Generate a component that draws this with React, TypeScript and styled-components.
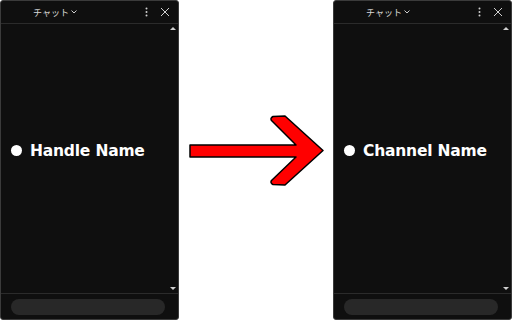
import React from 'react'
import styled, { createGlobalStyle } from 'styled-components';

const GlobalStyle = createGlobalStyle`
  html, body {
    margin: 0;
    padding: 0;
    background: #ffffff;
    font-family: "DejaVu Sans", Verdana, sans-serif;
  }
`

const Stage = styled.div`
  width: 512px;
  height: 320px;
  display: flex;
  background: #ffffff;
`

const Panel = styled.div`
  width: 179px;
  height: 320px;
  box-sizing: border-box;
  background: #0f0f0f;
  border: 1px solid #3b3b3b;
  border-radius: 3px;
  display: flex;
  flex-direction: column;
  overflow: hidden;
`

const Header = styled.div`
  height: 22px;
  flex: none;
  display: flex;
  align-items: center;
  border-bottom: 1px solid #2b2b2b;
  padding: 0 8px 0 32px;
  color: #d8d8d8;
  font-size: 9px;
  font-family: "Noto Sans CJK JP", sans-serif;

  .title {
    display: flex;
    align-items: center;
    gap: 1px;
    flex: 1;
  }

  .icons {
    display: flex;
    align-items: center;
    gap: 12px;
  }
`

const Body = styled.div`
  flex: 1;
  position: relative;
  display: flex;
  align-items: center;
  padding: 0 0 16px 10px;
`

const Scroll = styled.div<{ $down?: boolean }>`
  position: absolute;
  right: 2px;
  ${p => p.$down ? 'bottom: 3px;' : 'top: 3px;'}
  width: 0;
  height: 0;
  border-left: 3px solid transparent;
  border-right: 3px solid transparent;
  ${p => p.$down ? 'border-top: 3px solid #cfcfcf;' : 'border-bottom: 3px solid #cfcfcf;'}
`

const Label = styled.div`
  display: flex;
  align-items: center;
  gap: 8px;
  color: #ffffff;
  font-weight: bold;
  font-size: 15.5px;
  letter-spacing: -0.2px;

  &::before {
    content: '';
    width: 11px;
    height: 11px;
    border-radius: 50%;
    background: #ffffff;
  }
`

const Footer = styled.div`
  height: 25px;
  flex: none;
  border-top: 1px solid #2b2b2b;
  display: flex;
  align-items: center;
  padding: 0 13px 0 10px;
`

const Input = styled.div`
  flex: 1;
  height: 16px;
  border-radius: 8px;
  background: #282828;
`

const Middle = styled.div`
  flex: 1;
  display: flex;
  align-items: center;
`

function ChatPanel({ name }: { name: string }) {
  return (
    <Panel>
      <Header>
        <div className="title">
          チャット
          <svg width="8" height="6" viewBox="0 0 8 6">
            <path d="M1.5 1.5 L4 4 L6.5 1.5" fill="none" stroke="#cfcfcf" strokeWidth="1" />
          </svg>
        </div>
        <div className="icons">
          <svg width="3" height="10" viewBox="0 0 3 10">
            <circle cx="1.5" cy="1.5" r="1" fill="#d0d0d0" />
            <circle cx="1.5" cy="5" r="1" fill="#d0d0d0" />
            <circle cx="1.5" cy="8.5" r="1" fill="#d0d0d0" />
          </svg>
          <svg width="10" height="10" viewBox="0 0 10 10">
            <path d="M1 1 L9 9 M9 1 L1 9" stroke="#d0d0d0" strokeWidth="1" />
          </svg>
        </div>
      </Header>
      <Body>
        <Scroll />
        <Label>{name}</Label>
        <Scroll $down />
      </Body>
      <Footer>
        <Input />
      </Footer>
    </Panel>
  )
}

export default function App() {
  return (
    <>
      <GlobalStyle />
      <Stage>
        <ChatPanel name="Handle Name" />
        <Middle>
          <svg width="154" height="320" viewBox="179 0 154 320">
            <path
              d="M190 145 L296 145 L271.5 120.5 Q270 118 273 116.5 L285 116 L323 150.5 L285 185 L273 184.5 Q270 183 271.5 180.5 L296 157 L190 157 Z"
              fill="#ff0000"
              stroke="#000000"
              strokeWidth="1.5"
              strokeLinejoin="round"
            />
          </svg>
        </Middle>
        <ChatPanel name="Channel Name" />
      </Stage>
    </>
  )
}
